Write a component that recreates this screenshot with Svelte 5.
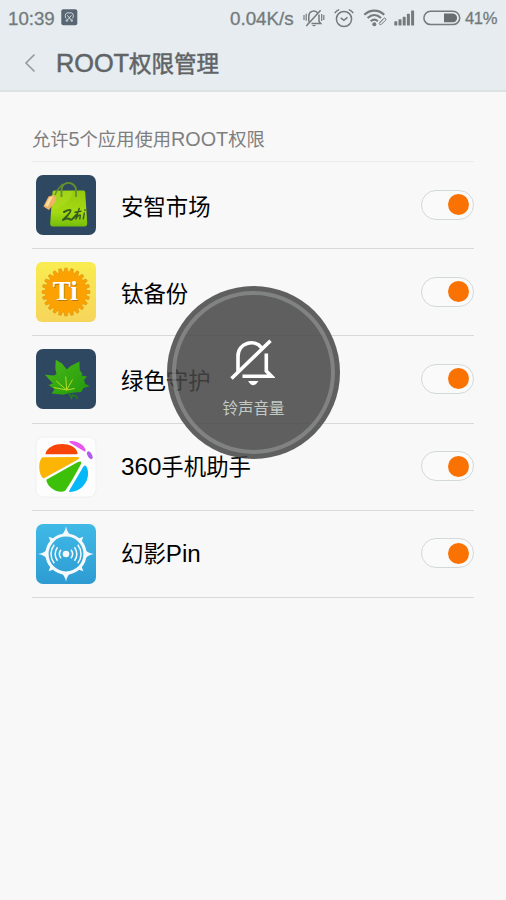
<script>
  let apps = $state([
    { id: "anzhi", name: "安智市场", latin: "", tail: "", on: true },
    { id: "titanium", name: "钛备份", latin: "", tail: "", on: true },
    { id: "greenify", name: "绿色守护", latin: "", tail: "", on: true },
    { id: "helper", name: "手机助手", latin: "360", tail: "", on: true },
    { id: "phantom", name: "幻影", latin: "", tail: "Pin", on: true }
  ]);

  let allowed = $derived(apps.filter((app) => app.on).length);

  // outline of the toothed wheel in the titanium icon
  function gear(cx, cy, outer, inner, teeth) {
    const points = [];
    const step = (Math.PI * 2) / teeth;
    for (let i = 0; i < teeth; i++) {
      for (const [offset, r] of [[-0.34, inner], [-0.2, outer], [0.2, outer], [0.34, inner]]) {
        const a = (i + offset) * step;
        points.push(`${(cx + r * Math.cos(a)).toFixed(2)},${(cy + r * Math.sin(a)).toFixed(2)}`);
      }
    }
    return points.join(" ");
  }
</script>

<div class="screen">
  <header>
    <div class="status">
      <span class="time">10:39</span>
      <svg class="notice" width="17" height="17" viewBox="0 0 17 17">
        <rect x="0.3" y="0.3" width="16" height="16" rx="2" fill="#586573" />
        <g fill="none" stroke="#dce3e7" stroke-width="0.9">
          <path d="M5.2 9.5C3.8 8.3 3.8 4.4 6 3.9h4.6c2.2.5 2.2 4.4.8 5.6M6.3 6.3l4.2 5M10.4 6.3l-4.2 5" />
          <circle cx="5.9" cy="11.6" r=".8" />
          <circle cx="10.8" cy="11.6" r=".8" />
        </g>
      </svg>
      <span class="speed">0.04K/s</span>
      <svg class="mute" width="22" height="20" viewBox="0 0 22 20">
        <g fill="none" stroke="#757b7d" stroke-width="1.5">
          <path d="M5.8 13.8V8a4.9 4.9 0 0 1 8.6-3.2M16 6.5v7l1.7 2H8.5M4.5 15.5h1M3.3 18 17.6 2.2" />
          <path d="M1 7v5M3.2 5.8v7M18.7 6v7M20.8 7v5" stroke-width="1.2" />
        </g>
        <path d="M8.8 17h4.4l-2.2 1.6z" fill="#757b7d" />
      </svg>
      <svg class="alarm" width="20" height="20" viewBox="0 0 20 20">
        <g fill="none" stroke="#757b7d" stroke-width="1.5">
          <circle cx="10" cy="11" r="7.6" />
          <path d="m6.7 9.8 3.2 2.6 3.6-3M.8 5.2Q2.2 2.6 5.2 1.6M19.2 5.2q-1.4-2.6-4.4-3.6" />
        </g>
      </svg>
      <svg class="wifi" width="25" height="18" viewBox="0 0 25 18">
        <g fill="none" stroke="#757b7d" stroke-width="2.1">
          <path d="M1.3 5.7C7.3.2 15.3.2 21.3 5.7M4.6 9c4.1-3.8 9.3-3.8 13.4 0M7.7 12.2c2.2-2 5-2 7.2 0" />
          <path d="m16.6 13.8 4-4.3c1.3-1.2 3.1.3 2 1.7l-4 4c-1.4 1.2-3.1-.2-2-1.4l3.4-3.4" stroke-width="1" />
        </g>
        <circle cx="11.3" cy="15.2" r="2" fill="#757b7d" />
      </svg>
      <svg class="signal" width="21" height="16" viewBox="0 0 21 16" fill="#757b7d">
        <rect x="0.3" y="11.2" width="3" height="4.4" rx=".7" />
        <rect x="4.5" y="9.3" width="3" height="6.3" rx=".7" />
        <rect x="8.7" y="6.7" width="3" height="8.9" rx=".7" />
        <rect x="12.9" y="3.8" width="3" height="11.8" rx=".7" />
        <rect x="17.1" y="0.4" width="3" height="15.2" rx=".7" />
      </svg>
      <svg class="battery" width="38" height="16" viewBox="0 0 38 16">
        <rect x=".9" y="1.2" width="35.8" height="13.4" rx="6.7" fill="none" stroke="#757b7d" stroke-width="1.5" />
        <path d="M21 3.5h8.9q4.1.6 4.1 4.4t-4.1 4.4H21z" fill="#686d70" />
      </svg>
      <span class="percent">41%</span>
    </div>
    <div class="titlebar">
      <svg class="back" width="12" height="20" viewBox="0 0 12 20">
        <path d="M10.5 1.5 2 10l8.5 8.5" fill="none" stroke="#96999b" stroke-width="1.6" />
      </svg>
      <h1><span class="latin">ROOT</span>权限管理</h1>
    </div>
  </header>

  <main>
    <p class="summary">允许<span class="latin">{allowed}</span>个应用使用<span class="latin">ROOT</span>权限</p>
    <ul>
      {#each apps as app (app.id)}
        <li>
          <svg class="icon" width="62" height="62" viewBox="0 0 62 62">
            {#if app.id === "anzhi"}
              <defs>
                <linearGradient id="bag" x1="0" y1="0" x2="0" y2="1">
                  <stop offset="0" stop-color="#92c90c" />
                  <stop offset="0.6" stop-color="#a5da12" />
                  <stop offset="1" stop-color="#74bd0a" />
                </linearGradient>
              </defs>
              <rect x="1" y="1" width="60" height="60" rx="7" fill="#2f4861" />
              <path d="M19 16.5h29.5q1.5 0 1.7 1.8l2 31q0 3.2-2.8 3.3l-31.5-.2q-2.8 0-2.7-3l2.3-31.3q0-1.5 1.5-1.6z" fill="url(#bag)" />
              <path d="M19 17h19C37 26 28 33 16.7 36.5l1.2-18z" fill="#bde52e" opacity=".35" />
              <path d="M26.5 23v-7c0-9.5 14-9.5 14.5 0v7" fill="none" stroke="#65912b" stroke-width="1.9" />
              <path d="M20 21q2-6 8-11" fill="none" stroke="#65912b" stroke-width="1.5" />
              <path d="m13.5 22.5 5-1.5 2.7 2.5-.8 4.5-6.6 8-5.4-3.4z" fill="#eeb367" />
              <path d="m14 24 4-1.7-5.2 10.5-2.6-1.3z" fill="#ffdc9b" />
              <path d="M29 38q5.5-3 6.5-1.8c1 1.8-5 7.3-7.5 9.8 2.6-1.5 5.3-2.5 7-.5 2 1.5 4.5-2.5 6.5-5" fill="none" stroke="#345b20" stroke-width="2" stroke-linecap="round" stroke-linejoin="round" />
              <path d="m44.2 34.5-3.4 10.5c2.3-3.6 4-4.7 4.6-3.8l-.7 3.8M40 38.3l6-1M49.3 39l-1 5.8M50 35.8v.6" fill="none" stroke="#345b20" stroke-width="1.4" stroke-linecap="round" stroke-linejoin="round" />
            {:else if app.id === "titanium"}
              <defs>
                <linearGradient id="gold" x1="0" y1="0" x2="0" y2="1">
                  <stop offset="0" stop-color="#f9ec4f" />
                  <stop offset="1" stop-color="#f6d55b" />
                </linearGradient>
              </defs>
              <rect x="1" y="1" width="60" height="60" rx="6" fill="url(#gold)" />
              <polygon points={gear(31, 31, 23.9, 20.4, 24)} fill="#fba202" stroke="#d89010" stroke-width=".6" />
              <text x="31" y="39.8" text-anchor="middle" class="ti-shadow">Ti</text>
              <text x="30.2" y="39.2" text-anchor="middle" class="ti">Ti</text>
            {:else if app.id === "greenify"}
              <defs>
                <linearGradient id="leaf" x1="0" y1="0" x2="1" y2="1">
                  <stop offset="0" stop-color="#4ab918" />
                  <stop offset="1" stop-color="#22980b" />
                </linearGradient>
              </defs>
              <rect x="1" y="1" width="60" height="60" rx="7" fill="#2f4861" />
              <path d="M20.8 11.8 27 15.5l4.8 6 3.8-3.5 8.8-4.6.4 9 2.6 3-1 2 5.6 1-3 3.6 1.2 4 4.5 2-6.2 1.9-2.4 4-6.6.6-5.4.7-6.5 1.5-3.2-.5-7.8-.7 3-4.3-6-4.2 4.3-1.6L10 26.8l8.7.6 2.8-1.2-1.2-6z" fill="url(#leaf)" />
              <path d="M33.5 44.5q2 3.5 3 5.5l1-3q4 .5 5 4" fill="none" stroke="#23801a" stroke-width="1.5" />
              <path d="m31.7 42-1-13.5M31.7 42l5.8-10.5M31.7 42l-10.5-9M31.7 42l-13-2.5M31.7 42l8-1.5" fill="none" stroke="#b4dc20" stroke-width="1" />
            {:else if app.id === "helper"}
              <rect x="1" y="1" width="60" height="60" rx="7" fill="#fdfdfd" stroke="#f0f0f0" />
              <path d="M10.5 17.7c3-12.5 29.5-12.8 32-.8.2 1-.5 1.3-2 1.3H12c-1.2 0-1.7 0-1.5-.5z" fill="#f74408" />
              <path d="m7.6 21.3 33.5-.4q6 0 1 3L8.6 42.5C3.5 40 2.5 24.5 7.6 21.3z" fill="#fcb504" />
              <path d="M11.3 43.7 42 26.4q6.4-3 3.2 3C40 39 35 48 30.2 54.7c-7.3 3.5-18.2-3.5-18.9-11z" fill="#3dc009" />
              <path d="M48.3 30.8q2-3 3.5.5c4.5 10-3 24.5-17.2 24.7-.7-.3-.6-1 0-2z" fill="#06b8f8" />
              <path d="M34.5 5.2c7-1 15.5 4 16.2 9.3q-.3 1.7-2.5.3L35 6.8q-1.2-1.2-.5-1.6z" fill="#e955ef" />
              <ellipse cx="54.8" cy="19.3" rx="2.2" ry="4.2" transform="rotate(-28 54.8 19.3)" fill="#b35bf1" />
            {:else}
              <defs>
                <linearGradient id="sky" x1="0" y1="0" x2="0" y2="1">
                  <stop offset="0" stop-color="#40bae7" />
                  <stop offset="1" stop-color="#2d9bd2" />
                </linearGradient>
              </defs>
              <rect x="1" y="1" width="60" height="60" rx="7" fill="url(#sky)" />
              <g fill="#f5f9fc">
                {#each [0, 90, 180, 270] as angle}
                  <path d="M31 3.2q1 6.5 5.5 9.3h-11Q30 10 31 3.2z" transform="rotate({angle} 31 31)" />
                  <path d="m31 6.5 3 6.5h-6z" transform="rotate({angle + 45} 31 31)" />
                {/each}
                <circle cx="31" cy="31" r="3.3" />
              </g>
              <circle cx="31" cy="31" r="19" fill="none" stroke="#f5f9fc" stroke-width="3.2" />
              <path d="M26 26.7q-3.3 4.3 0 8.6M36 26.7q3.3 4.3 0 8.6M22.5 24.2q-4.7 6.8 0 13.6M39.5 24.2q4.7 6.8 0 13.6M19.2 21.7q-6.5 9.3 0 18.6M42.8 21.7q6.5 9.3 0 18.6" fill="none" stroke="#f5f9fc" stroke-width="1.5" />
            {/if}
          </svg>
          <span class="name">{#if app.latin}<span class="latin">{app.latin}</span>{/if}{app.name}{#if app.tail}<span class="latin">{app.tail}</span>{/if}</span>
          <button class="switch" class:on={app.on} aria-label={app.name} onclick={() => (app.on = !app.on)}>
            <i></i>
          </button>
        </li>
      {/each}
    </ul>
  </main>

  <div class="volume">
    <svg width="46" height="50" viewBox="0 0 46 50">
      <g fill="none" stroke="#fff" stroke-width="3.6">
        <path d="M9 33.5V18.3C9 4.5 25.5.8 32.4 9.6" />
        <path d="M37.3 15.5V33l5.2 5.2H13.5M2.5 40.5 41.5 2.7" />
      </g>
      <path d="M19 43h10.5Q24.3 51.5 19 43z" fill="#fff" />
    </svg>
    <span>铃声音量</span>
  </div>
</div>

<style>
  :global(body) {
    margin: 0;
    background: #f8f8f8;
  }
  .screen {
    position: relative;
    box-sizing: border-box;
    width: 506px;
    height: 900px;
    overflow: hidden;
    background: #f8f8f8;
    font-family: "Noto Sans CJK SC", sans-serif;
  }
  .latin, .status {
    font-family: "Liberation Sans", sans-serif;
  }
  header {
    box-sizing: border-box;
    height: 92px;
    background: #e6ecef;
    border-bottom: 2px solid #dce1e2;
  }
  .status {
    display: flex;
    align-items: center;
    height: 35px;
    padding-left: 8px;
    color: #737a7c;
    -webkit-text-stroke: 0.3px #737a7c;
    line-height: 35px;
    white-space: nowrap;
  }
  .status svg { flex: none; }
  .time { width: 53px; font-size: 18.7px; padding-top: 2px; }
  .speed { width: 73px; margin-left: 152px; font-size: 18.8px; padding-top: 2px; }
  .alarm { margin-left: 9px; }
  .wifi { margin-left: 9px; }
  .signal { margin-left: 6px; }
  .battery { margin-left: 8px; }
  .percent { margin-left: 4px; font-size: 16.6px; padding-top: 2px; letter-spacing: -0.4px; }
  .titlebar {
    display: flex;
    align-items: center;
    height: 55px;
    padding-left: 24px;
  }
  h1 {
    margin: 0 0 0 20px;
    color: #606466;
    font-size: 22.5px;
    font-weight: 400;
    line-height: 50px;
    -webkit-text-stroke: 0.5px #606466;
  }
  h1 .latin { font-size: 25.3px; }
  main { padding: 0 32px; }
  .summary {
    box-sizing: border-box;
    height: 69px;
    margin: 0;
    padding-top: 31px;
    color: #7f7f7f;
    font-size: 18.3px;
    line-height: 30px;
    white-space: nowrap;
  }
  .summary .latin { font-size: 19.8px; }
  ul {
    margin: 0;
    padding: 0;
    list-style: none;
    border-top: 1px solid #ebebeb;
  }
  li {
    display: flex;
    align-items: center;
    box-sizing: border-box;
    height: 87.2px;
    padding-left: 3px;
    border-bottom: 1px solid #d9d9d9;
  }
  .icon { flex: none; }
  .ti, .ti-shadow {
    font-family: "Liberation Serif", serif;
    font-size: 27px;
    font-weight: 700;
    fill: #fff;
  }
  .ti-shadow { fill: #b97917; }
  .name {
    flex: 1;
    margin-left: 24px;
    padding-bottom: 1px;
    color: #000;
    font-size: 22.4px;
    line-height: 32px;
  }
  .name .latin { font-size: 24.2px; }
  .switch {
    display: flex;
    align-items: center;
    box-sizing: border-box;
    width: 53px;
    height: 30px;
    margin-bottom: 1px;
    padding: 0 4px;
    border: 1px solid #d3d8da;
    border-radius: 15px;
    background: #fafafa;
  }
  .switch i {
    width: 21px;
    height: 21px;
    border-radius: 50%;
    background: #c4c4c4;
  }
  .switch.on { justify-content: flex-end; }
  .switch.on i { background: #f97202; }
  .volume {
    position: absolute;
    left: 167px;
    top: 286px;
    display: flex;
    flex-direction: column;
    align-items: center;
    box-sizing: border-box;
    width: 173px;
    height: 173px;
    padding-top: 52px;
    border-radius: 50%;
    background: rgba(70, 70, 70, 0.86);
  }
  .volume::before {
    content: "";
    position: absolute;
    inset: 5px;
    border: 4.5px solid rgba(150, 155, 152, 0.6);
    border-radius: 50%;
  }
  .volume svg { margin-right: 4px; }
  .volume span {
    margin-top: 7px;
    color: #c3cac4;
    font-size: 15.5px;
    line-height: 24px;
  }
</style>
